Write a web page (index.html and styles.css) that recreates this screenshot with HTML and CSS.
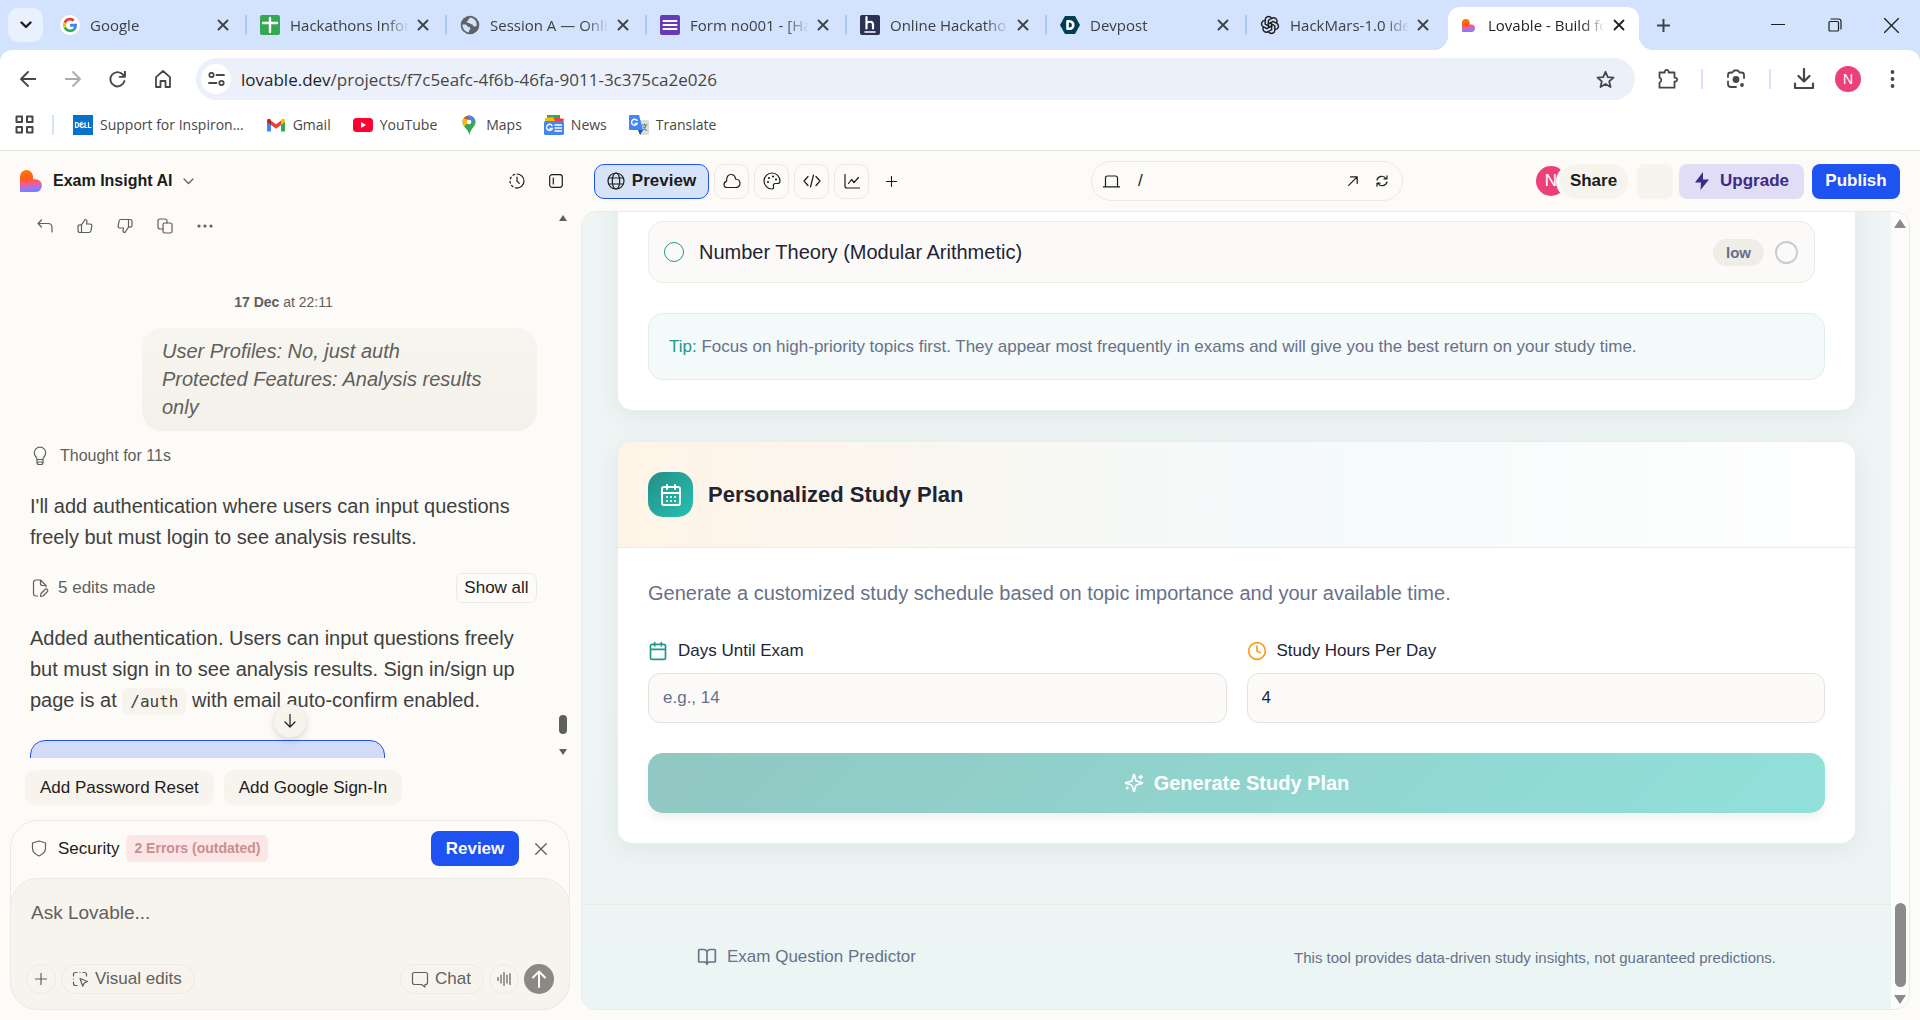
FILE: index.html
```html
<!DOCTYPE html>
<html lang="en">
<head>
  <meta charset="UTF-8">
  <title>Lovable - Build</title>
  <link rel="stylesheet" href="styles.css">
</head>
<body>

  <!-- Shared icons -->
  <svg class="sprite" aria-hidden="true">
    <linearGradient id="heartFill" x1="0.45" y1="0" x2="0.55" y2="1">
      <stop offset="0" stop-color="#ff7a00"/>
      <stop offset="0.4" stop-color="#ff5a1f"/>
      <stop offset="0.6" stop-color="#fb5a86"/>
      <stop offset="0.85" stop-color="#8f7bff"/>
      <stop offset="1" stop-color="#6a82ff"/>
    </linearGradient>
    <symbol id="x" viewBox="0 0 12 12"><path d="M1.5 1.5l9 9M10.5 1.5l-9 9"/></symbol>
    <symbol id="plus" viewBox="0 0 12 12"><path d="M6 0.5v11M0.5 6h11"/></symbol>
    <symbol id="heart" viewBox="0 0 22 22"><path d="M0 6.5A6.5 6.5 0 0 1 13 6.5V9.200h2.500A6.400 6.400 0 0 1 15.500 22H0z" fill="url(#heartFill)" stroke="none"/></symbol>
  </svg>

  <!-- Tab strip -->
  <header class="tabstrip">
    <button class="tab-search" aria-label="Search tabs"><svg width="12" height="8" viewBox="0 0 12 8"><path d="M1.500 1.500L6 6l4.500-4.500" stroke-width="2.400"/></svg></button>
    <nav class="tabs">
      <div class="tab">
        <svg class="favicon" viewBox="0 0 20 20"><g stroke="none"><circle cx="10" cy="10" r="10" fill="#fff"/><path fill="#4285f4" d="M17 8.700H10v3h4c-.2 1-.7 1.700-1.500 2.200l2.300 1.800C16.300 14.300 17.200 12 17 8.700z"/><path fill="#34a853" d="M3.700 13.300C4.900 15.600 7.200 17.200 10 17.200c1.900 0 3.500-.6 4.800-1.600l-2.400-1.800c-2.300 1.500-5.400.5-6.300-2.300z"/><path fill="#fbbc05" d="M3.700 13.300c-1-2.100-1-4.500 0-6.600l2.400 1.800c-.3 1-.3 2 0 3z"/><path fill="#ea4335" d="M3.700 6.700C4.900 4.400 7.200 2.800 10 2.800c1.900 0 3.500.7 4.700 1.900l-2.100 2C10.500 4.700 7 5.500 6.100 8.500z"/></g></svg>
        <span class="tab-title">Google</span>
        <button class="tab-close" aria-label="Close tab"><svg><use href="#x"/></svg></button>
      </div>
      <div class="tab">
        <svg class="favicon" viewBox="0 0 20 20"><rect width="20" height="20" rx="2" fill="#34a853" stroke="none"/><path d="M10 3v14M3 8h14" stroke="#fff" stroke-width="2.400"/></svg>
        <span class="tab-title">Hackathons Infor</span>
        <button class="tab-close" aria-label="Close tab"><svg><use href="#x"/></svg></button>
      </div>
      <div class="tab">
        <svg class="favicon" viewBox="0 0 20 20"><g stroke="none"><circle cx="10" cy="10" r="9.300" fill="#5f6368"/><path fill="#d3e2fd" d="M10.500 2.500c-.8 1-2 1.100-2 2.300 0 1-1.800.9-1.800 2.200 0 1.100 2.300.3 3.300 1.600.8 1 2.800.2 3 1.800.2 1.500 2.500 1 3.700.3.500-3.800-1.700-7.300-6.200-8.200zM2.500 9.500c-.3 3.800 2.400 7.500 6.500 7.900.2-1.400-.3-2 1-2.900 1.200-.9-.2-2.400-1.400-2.500C7 12 7 9.800 5.500 9.600z"/></g></svg>
        <span class="tab-title">Session A — Onli</span>
        <button class="tab-close" aria-label="Close tab"><svg><use href="#x"/></svg></button>
      </div>
      <div class="tab">
        <svg class="favicon" viewBox="0 0 20 20"><rect width="20" height="20" rx="2" fill="#673ab7" stroke="none"/><path d="M3.500 6h2M7 6h9.500M3.500 10h2M7 10h9.500M3.500 14h2M7 14h9.500" stroke="#fff" stroke-width="2"/></svg>
        <span class="tab-title">Form no001 - [Ha</span>
        <button class="tab-close" aria-label="Close tab"><svg><use href="#x"/></svg></button>
      </div>
      <div class="tab">
        <svg class="favicon" viewBox="0 0 20 20"><rect width="20" height="20" rx="2" fill="#2b3252" stroke="none"/><path d="M6.500 2v11.500M6.500 8.500c1-2 6.500-3 6.500 1v4" stroke="#fff" stroke-width="2.200"/><path d="M5 17h10" stroke="#fff" stroke-width="1.500"/></svg>
        <span class="tab-title">Online Hackatho</span>
        <button class="tab-close" aria-label="Close tab"><svg><use href="#x"/></svg></button>
      </div>
      <div class="tab">
        <svg class="favicon" viewBox="0 0 20 20"><path d="M5 1h10l5 9-5 9H5L0 10z" fill="#003e54" stroke="none"/><path d="M7.500 6.200h2c5 0 5 7.600 0 7.600h-2z" stroke="#fff" stroke-width="2.600"/></svg>
        <span class="tab-title">Devpost</span>
        <button class="tab-close" aria-label="Close tab"><svg><use href="#x"/></svg></button>
      </div>
      <div class="tab">
        <svg class="favicon" viewBox="0 0 24 24"><g stroke="#1f1f1f" stroke-width="1.700"><path id="petal" d="M10 13.200V6.500l4.500-2.600a4 4 0 0 1 5.500 5.200"/><use href="#petal" transform="rotate(60 12 12)"/><use href="#petal" transform="rotate(120 12 12)"/><use href="#petal" transform="rotate(180 12 12)"/><use href="#petal" transform="rotate(240 12 12)"/><use href="#petal" transform="rotate(300 12 12)"/></g></svg>
        <span class="tab-title">HackMars-1.0 ide</span>
        <button class="tab-close" aria-label="Close tab"><svg><use href="#x"/></svg></button>
      </div>
      <div class="tab active">
        <svg class="favicon small"><use href="#heart"/></svg>
        <span class="tab-title">Lovable - Build fo</span>
        <button class="tab-close" aria-label="Close tab"><svg><use href="#x"/></svg></button>
      </div>
    </nav>
    <button class="new-tab" aria-label="New tab"><svg width="13" height="13"><use href="#plus"/></svg></button>
    <div class="window-buttons">
      <button aria-label="Minimize"><svg width="14" height="14" viewBox="0 0 14 14"><path d="M0.500 6.500h13"/></svg></button>
      <button aria-label="Restore"><svg width="14" height="14" viewBox="0 0 14 14"><rect x="1" y="3.500" width="9.500" height="9.500" rx="1"/><path d="M3 1h7.500q2.500 0 2.500 2.500V11"/></svg></button>
      <button aria-label="Close"><svg width="15" height="15" viewBox="0 0 14 14"><path d="M0.500 0.500l13 13M13.500 0.500l-13 13"/></svg></button>
    </div>
  </header>

  <!-- Address bar -->
  <div class="toolbar">
    <div class="nav-buttons">
      <button aria-label="Back"><svg width="16" height="16" viewBox="0 0 16 16"><path d="M15.500 8H1.500M8 1L1 8l7 7"/></svg></button>
      <button class="dim" aria-label="Forward"><svg width="16" height="16" viewBox="0 0 16 16"><path d="M.5 8h14M8 1l7 7-7 7"/></svg></button>
      <button aria-label="Reload"><svg width="17" height="17" viewBox="0 0 16 16"><path d="M14.500 9.500A6.700 6.700 0 1 1 13 3.300L14.800 5.200M15 0.500v5h-5"/></svg></button>
      <button aria-label="Home"><svg width="16" height="18" viewBox="0 0 16 18"><path d="M1 7.200L8 1l7 6.200V17h-4.500v-6h-5v6H1z"/></svg></button>
    </div>
    <div class="omnibox">
      <button class="site-info" aria-label="Site information"><svg width="17" height="14" viewBox="0 0 17 14"><circle cx="3.500" cy="3" r="2.200"/><path d="M8.500 3H16M1 11h7.500"/><circle cx="13.500" cy="11" r="2.200"/></svg></button>
      <div class="url"><b>lovable.dev</b>/projects/f7c5eafc-4f6b-46fa-9011-3c375ca2e026</div>
      <button class="star" aria-label="Bookmark this page"><svg width="19" height="19" viewBox="0 0 19 19"><path d="M9.500 1.800l2.300 5.300 5.700.5-4.300 3.800 1.300 5.600-5-3-5 3 1.300-5.600L1.500 7.600l5.700-.5z"/></svg></button>
    </div>
    <div class="tools">
      <button aria-label="Extensions"><svg width="22" height="22" viewBox="0 0 22 22"><path d="M2.500 4.500h5.300a2 2 0 1 1 3.800 0h5.900v5.200a2 2 0 1 1 0 3.800v6.200h-15v-5.200a2.500 2.500 0 0 0 0-4.800z"/></svg></button>
      <i></i>
      <button aria-label="Search with Lens"><svg width="20" height="20" viewBox="0 0 20 20"><path d="M2 8V6q0-2.500 2.500-2.500h2L8 1.500h4l1.500 2h2Q18 3.500 18 6v3M2 12.500V15q0 3 3 3h5"/><circle cx="10" cy="10.500" r="3.400" fill="#474747" stroke="none"/><circle cx="16" cy="16" r="1.900" fill="#474747" stroke="none"/></svg></button>
      <i></i>
      <button aria-label="Downloads"><svg width="22" height="22" viewBox="0 0 22 22"><path d="M11 1v12M5.500 8l5.500 5.500L16.500 8M2 15.500V20h18v-4.500" stroke-width="2.200"/></svg></button>
      <button class="profile" aria-label="Profile">N</button>
      <button aria-label="Menu"><svg width="5" height="18" viewBox="0 0 5 18"><g fill="#474747" stroke="none"><circle cx="2.500" cy="2" r="1.900"/><circle cx="2.500" cy="9" r="1.900"/><circle cx="2.500" cy="16" r="1.900"/></g></svg></button>
    </div>
  </div>

  <!-- Bookmarks -->
  <nav class="bookmarks">
    <button class="apps" aria-label="Apps"><svg width="19" height="19" viewBox="0 0 19 19"><path d="M1.500 1.500h5.500v5.500H1.500zM12 1.500h5.500v5.500H12zM1.500 12h5.500v5.500H1.500zM12 12h5.500v5.500H12z" stroke-width="2"/></svg></button>
    <i></i>
    <a href="#"><svg viewBox="0 0 20 20"><rect width="20" height="20" fill="#0672cb" stroke="none"/><path d="M2.500 7.500v5h1q2 0 2-2.500t-2-2.500zM8.800 7.200L7 8.700v2.600l2 1.400 2-1.200M7.300 10.600l3-2M12 7.500v5h2M15.500 7.500v5h2.500" stroke="#fff" stroke-width="1.200"/></svg>Support for Inspiron...</a>
    <a href="#"><svg viewBox="0 0 20 20"><g stroke="none"><path fill="#4285f4" d="M1 16.500h4V9L1 6z"/><path fill="#34a853" d="M15 16.500h4V6l-4 3z"/><path fill="#ea4335" d="M5 5.500l5 3.800 5-3.800V10l-5 3.800L5 10z"/><path fill="#c5221f" d="M1 6q0-3 3-2l1 1.500V10L1 7z"/><path fill="#fbbc04" d="M15 5.500L16 4q3-1 3 2v1l-4 3z"/></g></svg>Gmail</a>
    <a href="#"><svg viewBox="0 0 20 20"><g stroke="none"><rect y="3" width="20" height="14" rx="3.500" fill="#f03"/><path d="M8 7l5 3-5 3z" fill="#fff"/></g></svg>YouTube</a>
    <a href="#"><svg viewBox="0 0 20 20"><g stroke="none"><path fill="#34a853" d="M3.500 7a6.500 6.500 0 0 1 13 0c0 5-5 6-6 13-1-6-7-8-7-13z"/><path fill="#4285f4" d="M7 1.200a6.500 6.500 0 0 1 9 3.500L11 9 8 5z"/><path fill="#ea4335" d="M7.500 1L4.600 3.300 8 6l2-2.500z"/><path fill="#fbbc04" d="M4.600 3.200C3 5.500 3.300 9 5 11.500l6.500-6z"/><circle cx="10" cy="7" r="2.300" fill="#fff"/></g></svg>Maps</a>
    <a href="#"><svg viewBox="0 0 20 20"><g stroke="none"><path fill="#34a853" d="M3 0h13v8H3z"/><path fill="#ea4335" d="M10 2l10 2-2 6H8z"/><path fill="#fbbc04" d="M1 3l8-1 3 6H1z"/><rect y="6" width="20" height="14" rx="1.500" fill="#4285f4"/></g><path d="M8 10.600a3 3 0 1 0 .3 3H6M11 10h6.500M11 13h6.500M11 16h6.500" stroke="#fff" stroke-width="1.500"/></svg>News</a>
    <a href="#"><svg viewBox="0 0 20 20"><g stroke="none"><path fill="#dcdcdc" d="M7 5h12q1 0 1 1v13q0 1-1 1h-8z"/><path fill="#4285f4" d="M1 0h9l4 15H1q-1 0-1-1V1q0-1 1-1z"/><path fill="#174ea6" d="M9 15h5l-3 5z"/></g><path d="M8 5.500a3 3 0 1 0 .3 3H6" stroke="#fff" stroke-width="1.400"/><path d="M13 10h5M15.500 9v1M17 10q-1 4-3 5M14.500 12l3 3.500" stroke="#607d8b" stroke-width="1.100"/></svg>Translate</a>
  </nav>

  <div class="app">

    <!-- Chat side -->
    <section class="chat">
      <div class="chat-head">
        <svg class="logo"><use href="#heart"/></svg>
        <button class="project">Exam Insight AI <svg width="11" height="7" viewBox="0 0 11 7"><path d="M1 1l4.500 4.500L10 1"/></svg></button>
        <button class="head-icon" aria-label="History"><svg width="16" height="16" viewBox="0 0 16 16"><path d="M8 1a7 7 0 0 1 0 14M8 4v4l2.300 2.300"/><path d="M8 15A7 7 0 0 1 8 1" stroke-dasharray="1.800 2.600"/></svg></button>
        <button class="head-icon" aria-label="Toggle panel"><svg width="14" height="14" viewBox="0 0 14 14"><rect x=".7" y=".7" width="12.600" height="12.600" rx="2.500"/><path d="M4.300 4v6"/></svg></button>
      </div>

      <div class="messages">
        <div class="actions">
          <button aria-label="Revert"><svg width="16" height="16" viewBox="0 0 16 16"><path d="M4.500 2L1 5.500 4.500 9M1 5.500h10q4 0 4 4V14"/></svg></button>
          <button aria-label="Good"><svg width="16" height="16" viewBox="0 0 16 16"><path d="M4.500 6.800L8 1.500q2 0 2 2L9.500 6H13q2.200 0 1.800 2.200l-.8 4.500Q13.600 14.500 12 14.500H3Q1 14.500 1 12.500v-4Q1 6.800 3 6.800zM4.500 6.800v7.700"/></svg></button>
          <button aria-label="Bad"><svg width="16" height="16" viewBox="0 0 16 16"><path d="M11.500 9.200L8 14.500q-2 0-2-2L6.500 10H3Q.8 10 1.200 7.800L2 3.300Q2.400 1.500 4 1.500h9q2 0 2 2v4q0 1.700-2 1.700zM11.500 9.200V1.500"/></svg></button>
          <button aria-label="Copy"><svg width="16" height="16" viewBox="0 0 16 16"><rect x="6" y="5" width="9" height="10" rx="1.800"/><path d="M6 11H3Q1 11 1 9V3q0-2 2-2h5q2 0 2 2v2"/></svg></button>
          <button aria-label="More"><svg width="16" height="16" viewBox="0 0 16 16"><g fill="#5f5f5d" stroke="none"><circle cx="2" cy="8" r="1.600"/><circle cx="8" cy="8" r="1.600"/><circle cx="14" cy="8" r="1.600"/></g></svg></button>
        </div>
        <div class="date"><b>17 Dec</b> at 22:11</div>
        <div class="bubble">User Profiles: No, just auth<br>Protected Features: Analysis results only</div>
        <div class="thought"><svg width="20" height="20" viewBox="0 0 20 20"><path d="M7 13.500q0-1.500-1.300-3A5.700 5.700 0 1 1 14.300 10.500Q13 12 13 13.500zM7 13.500v3q0 2 2 2h2q2 0 2-2v-3M7.500 16h5"/></svg>Thought for 11s</div>
        <p>I'll add authentication where users can input questions freely but must login to see analysis results.</p>
        <div class="edits">
          <svg width="20" height="20" viewBox="0 0 20 20"><path d="M7.500 18H6q-2.500 0-2.500-2.500v-11Q3.500 2 6 2h4.500L16 7.500V9M10.500 2v3.500q0 2 2 2H16M10.500 18.500l.5-3 4.500-4.500q1.300-.5 2 .5t0 2L13 18z"/></svg>
          <span>5 edits made</span>
          <button>Show all</button>
        </div>
        <p>Added authentication. Users can input questions freely but must sign in to see analysis results. Sign in/sign up page is at <code>/auth</code> with email auto-confirm enabled.</p>
        <div class="version"></div>
        <button class="to-bottom" aria-label="Scroll to bottom"><svg width="12" height="14" viewBox="0 0 12 14"><path d="M6 .5v12M1 8l5 5 5-5"/></svg></button>
        <div class="scroll"><span class="up"></span><span class="thumb"></span><span class="down"></span></div>
      </div>

      <div class="suggestions">
        <button>Add Password Reset</button>
        <button>Add Google Sign-In</button>
      </div>

      <div class="composer">
        <div class="security">
          <svg width="16" height="17" viewBox="0 0 16 17"><path d="M8 1l6.500 2v5.500Q14.500 13 8 16 1.500 13 1.500 8.500V3z"/></svg>
          <span>Security</span>
          <span class="errors">2 Errors (outdated)</span>
          <button class="review">Review</button>
          <button class="dismiss" aria-label="Dismiss"><svg width="14" height="14"><use href="#x"/></svg></button>
        </div>
        <form class="prompt">
          <textarea rows="1" placeholder="Ask Lovable..." aria-label="Ask Lovable"></textarea>
          <div class="prompt-row">
            <button type="button" class="round" aria-label="Add"><svg width="12" height="12"><use href="#plus"/></svg></button>
            <button type="button" class="pill"><svg width="17" height="17" viewBox="0 0 17 17"><path d="M1.500 5V3.500q0-2 2-2H5M11 1.500h1.500q2 0 2 2V5M1.500 11v1.500q0 2 2 2H5M8 1.500h.1M1.500 8h.1M8 7.500l7.500 3-3.300 1.500-1.500 3.300z"/></svg>Visual edits</button>
            <span class="space"></span>
            <button type="button" class="pill"><svg width="18" height="17" viewBox="0 0 18 17"><path d="M3.500 1.500h11q2 0 2 2v8q0 2-2 2h-.5V16l-3.500-2.500h-7q-2 0-2-2v-8q0-2 2-2z"/></svg>Chat</button>
            <button type="button" class="round" aria-label="Voice"><svg width="14" height="14" viewBox="0 0 14 14"><path d="M1 5.500v3M4 3v8M7 .5v13M10 3v8M13 1.500v11"/></svg></button>
            <button class="send" aria-label="Send"><svg width="14" height="18" viewBox="0 0 14 18"><path d="M7 17V1.500M1 7.500l6-6 6 6"/></svg></button>
          </div>
        </form>
      </div>
    </section>

    <!-- Preview side -->
    <section class="preview">
      <div class="preview-head">
        <div class="views">
          <button class="view selected"><svg width="18" height="18" viewBox="0 0 18 18"><circle cx="9" cy="9" r="8"/><ellipse cx="9" cy="9" rx="3.700" ry="8"/><path d="M1.500 6h15M1.500 12h15"/></svg>Preview</button>
          <button class="view" aria-label="Cloud"><svg width="18" height="16" viewBox="0 0 18 16"><path d="M4 14.500q-3 0-3-3 0-2.500 2.500-3.200Q3.500 1.500 8 1.500q4 0 4.500 4.500 4.500.3 4.500 4.300t-4 4.200z"/></svg></button>
          <button class="view" aria-label="Design"><svg width="18" height="18" viewBox="0 0 18 18"><path d="M9 1a8 8 0 0 0 0 16q2 0 1.500-2.200-.8-3.300 2-3.300h2Q17 11.500 17 9A8 8 0 0 0 9 1z"/><g fill="#1c1c1c" stroke="none"><circle cx="5" cy="10" r="1.100"/><circle cx="6" cy="6" r="1.100"/><circle cx="10" cy="4.500" r="1.100"/><circle cx="13" cy="7.500" r="1.100"/></g></svg></button>
          <button class="view" aria-label="Code"><svg width="18" height="14" viewBox="0 0 18 14"><path d="M5 2.500L1 7l4 4.500M13 2.500L17 7l-4 4.500M10.500 1l-3 12"/></svg></button>
          <button class="view" aria-label="Analytics"><svg width="16" height="15" viewBox="0 0 16 15"><path d="M1 .5V12q0 2 2 2h12.500M4.500 9.500l3-4 2.500 3 4.500-5"/></svg></button>
          <button class="view plain" aria-label="More views"><svg width="11" height="11"><use href="#plus"/></svg></button>
        </div>
        <div class="path">
          <svg width="17" height="13" viewBox="0 0 17 13"><path d="M2.500 11.500V3q0-2 2-2h8q2 0 2 2v8.500M0 11.800h17"/></svg>
          <input type="text" value="/" aria-label="Path">
          <button aria-label="Open in new tab"><svg width="10" height="10" viewBox="0 0 10 10"><path d="M.7 9.300l8.500-8.500M2.500.8h6.700v6.700"/></svg></button>
          <button aria-label="Refresh"><svg width="12" height="12" viewBox="0 0 12 12"><path d="M1 5a5 5 0 0 1 9-1.500M11 .8v3H8M11 7a5 5 0 0 1-9 1.500M1 11.200v-3h3"/></svg></button>
        </div>
        <div class="account">
          <span class="avatar">N</span>
          <button class="share">Share</button>
          <button class="blank" aria-label="GitHub"></button>
          <button class="upgrade"><svg width="16" height="18" viewBox="0 0 16 18"><path d="M9 0L1 10.500h6L6.500 18 15 7.500H9z" fill="#3a2c88" stroke="none"/></svg>Upgrade</button>
          <button class="publish">Publish</button>
        </div>
      </div>

      <div class="frame">
        <div class="page">
          <main>
            <div class="card topics">
              <label class="topic">
                <span class="dot"></span>
                <span class="topic-name">Number Theory (Modular Arithmetic)</span>
                <span class="level">low</span>
                <input type="checkbox">
              </label>
              <div class="tip"><span>Tip:</span> Focus on high-priority topics first. They appear most frequently in exams and will give you the best return on your study time.</div>
            </div>

            <div class="card plan">
              <div class="plan-head">
                <span class="badge"><svg width="24" height="24" viewBox="0 0 24 24"><path d="M8 2v4M16 2v4M3 10h18M5 4h14a2 2 0 0 1 2 2v14a2 2 0 0 1-2 2H5a2 2 0 0 1-2-2V6a2 2 0 0 1 2-2zM8 14h.01M12 14h.01M16 14h.01M8 18h.01M12 18h.01M16 18h.01"/></svg></span>
                <h2>Personalized Study Plan</h2>
              </div>
              <form class="plan-body">
                <p>Generate a customized study schedule based on topic importance and your available time.</p>
                <div class="fields">
                  <div class="field">
                    <label for="days"><svg class="teal" width="20" height="20" viewBox="0 0 24 24"><path d="M8 2v4M16 2v4M3 10h18M5 4h14a2 2 0 0 1 2 2v14a2 2 0 0 1-2 2H5a2 2 0 0 1-2-2V6a2 2 0 0 1 2-2z"/></svg>Days Until Exam</label>
                    <input type="text" id="days" placeholder="e.g., 14">
                  </div>
                  <div class="field">
                    <label for="hours"><svg class="amber" width="20" height="20" viewBox="0 0 24 24"><circle cx="12" cy="12" r="10"/><path d="M12 6v6l4 2"/></svg>Study Hours Per Day</label>
                    <input type="text" id="hours" value="4">
                  </div>
                </div>
                <button class="generate" disabled><svg width="20" height="20" viewBox="0 0 24 24"><path d="M9.900 15.500A2 2 0 0 0 8.500 14.100l-6.100-1.600a.5.5 0 0 1 0-1L8.500 9.900A2 2 0 0 0 9.900 8.500l1.600-6.100a.5.5 0 0 1 1 0L14.100 8.500a2 2 0 0 0 1.400 1.400l6.100 1.600a.5.5 0 0 1 0 1l-6.100 1.600a2 2 0 0 0-1.400 1.400l-1.600 6.100a.5.5 0 0 1-1 0zM20 3v4M22 5h-4M4 17v2M5 18H3"/></svg>Generate Study Plan</button>
              </form>
            </div>
          </main>

          <footer>
            <span class="brand"><svg width="20" height="20" viewBox="0 0 24 24"><path d="M12 7v14M3 18a1 1 0 0 1-1-1V4a1 1 0 0 1 1-1h5a4 4 0 0 1 4 4 4 4 0 0 1 4-4h5a1 1 0 0 1 1 1v13a1 1 0 0 1-1 1h-6a3 3 0 0 0-3 3 3 3 0 0 0-3-3z"/></svg>Exam Question Predictor</span>
            <span class="note">This tool provides data-driven study insights, not guaranteed predictions.</span>
          </footer>
        </div>
        <div class="page-scroll"><span class="up"></span><span class="thumb"></span><span class="down"></span></div>
      </div>
    </section>
  </div>

</body>
</html>
```

FILE: styles.css
```css
* {
  box-sizing: border-box;
}

body {
  margin: 0;
  height: 100vh;
  display: flex;
  flex-direction: column;
  overflow: hidden;
  background: #d3e2fd;
  font-family: "Liberation Sans", Arial, sans-serif;
  color: #1c1c1c;
}

button, input, textarea {
  font: inherit;
  color: inherit;
}

button {
  display: flex;
  align-items: center;
  justify-content: center;
  padding: 0;
  border: none;
  background: none;
  white-space: nowrap;
}

svg {
  flex: none;
  fill: none;
  stroke: currentColor;
  stroke-width: 1.2;
  stroke-linecap: round;
  stroke-linejoin: round;
}

.sprite {
  position: absolute;
  width: 0;
  height: 0;
}

/* Tab strip */
.tabstrip {
  height: 50px;
  flex: none;
  display: flex;
  align-items: center;
  padding-left: 8px;
  font-family: "Open Sans", "Noto Sans", sans-serif;
  font-size: 15px;
  color: #3c4043;
}

.tab-search {
  width: 35px;
  height: 34px;
  border-radius: 10px;
  background: #e9f0fe;
  color: #1f1f1f;
}

.tabs {
  display: flex;
  align-self: stretch;
  padding-left: 5px;
}

.tab {
  width: 200px;
  display: flex;
  align-items: center;
  padding: 0 19px 0 12px;
  position: relative;
}

.tab:not(.active)::after {
  content: "";
  position: absolute;
  right: 1px;
  width: 2px;
  height: 20px;
  background: #a8c7fa;
}

.tab:nth-last-child(2)::after {
  display: none;
}

.favicon {
  width: 20px;
  height: 20px;
}

.favicon.small {
  width: 13px;
  height: 13px;
}

.tab-title {
  flex: 1;
  margin: 0 8px 0 10px;
  overflow: hidden;
  white-space: nowrap;
  -webkit-mask-image: linear-gradient(to right, #000 80%, transparent);
  mask-image: linear-gradient(to right, #000 80%, transparent);
}

.tab-close svg {
  width: 12px;
  height: 12px;
  stroke-width: 1.8;
}

.tab.active {
  width: 191px;
  margin-top: 7px;
  padding: 0 14px;
  background: #fff;
  border-radius: 12px 12px 0 0;
  color: #1f1f1f;
}

.tab.active .tab-title {
  margin-left: 13px;
}

.tab.active .favicon,
.tab.active .tab-title,
.tab.active .tab-close {
  margin-bottom: 7px;
}

/* inverted corners at the foot of the active tab */
.tab.active::before,
.tab.active::after {
  content: "";
  position: absolute;
  bottom: 0;
  width: 14px;
  height: 14px;
}

.tab.active::before {
  left: -14px;
  background: radial-gradient(circle at 0 0, transparent 14px, #fff 14px);
}

.tab.active::after {
  right: -14px;
  background: radial-gradient(circle at 100% 0, transparent 14px, #fff 14px);
}

.new-tab {
  margin-left: 18px;
}

.new-tab svg {
  stroke-width: 1.8;
}

.window-buttons {
  margin-left: auto;
  display: flex;
  color: #1f1f1f;
}

.window-buttons button {
  width: 57px;
  height: 42px;
}

/* Address bar */
.toolbar {
  flex: none;
  height: 58px;
  display: flex;
  align-items: center;
  padding: 0 11px 0 5px;
  background: #fff;
  border-radius: 12px 12px 0 0;
  color: #474747;
}

.toolbar svg {
  stroke-width: 1.8;
}

.nav-buttons {
  display: flex;
  width: 191px;
}

.nav-buttons button {
  width: 45px;
  height: 40px;
}

.dim {
  opacity: 0.45;
}

.omnibox {
  flex: 1;
  height: 42px;
  display: flex;
  align-items: center;
  padding: 0 20px 0 5px;
  border-radius: 21px;
  background: #ebf0fa;
}

.site-info {
  width: 30px;
  height: 30px;
  border-radius: 50%;
  background: #fff;
}

.url {
  flex: 1;
  margin-left: 10px;
  font-family: "Open Sans", "Noto Sans", sans-serif;
  font-size: 17px;
}

.url b {
  font-weight: normal;
  color: #1f1f1f;
}

.tools {
  display: flex;
  align-items: center;
  padding-left: 16px;
}

.tools button {
  width: 34px;
  height: 34px;
}

.tools i,
.bookmarks i {
  width: 2px;
  height: 20px;
  background: #d3e2fd;
}

.tools i {
  margin: 0 16px;
}

.tools .profile {
  width: 26px;
  height: 26px;
  margin: 0 14px;
  border-radius: 50%;
  background: #ec407a;
  color: #fff;
  font-size: 14px;
}

/* Bookmarks */
.bookmarks {
  flex: none;
  height: 43px;
  display: flex;
  align-items: center;
  padding: 0 15px 9px;
  background: #fff;
  border-bottom: 1px solid #dfe4de;
  font-family: "Open Sans", "Noto Sans", sans-serif;
  font-size: 14px;
  color: #474747;
}

.bookmarks i {
  margin: 0 19px 0 18px;
}

.bookmarks a {
  display: flex;
  align-items: center;
  gap: 7px;
  margin-right: 22px;
  color: inherit;
  text-decoration: none;
}

.bookmarks a svg {
  width: 20px;
  height: 20px;
}

/* App */
.app {
  flex: 1;
  min-height: 0;
  display: flex;
  background: #fcfbf8;
}

.chat {
  flex: none;
  width: 581px;
  display: flex;
  flex-direction: column;
  padding: 0 11px 10px 10px;
}

.chat-head {
  height: 60px;
  flex: none;
  display: flex;
  align-items: center;
  gap: 11px;
  padding-left: 10px;
}

.logo {
  width: 22px;
  height: 22px;
}

.project {
  gap: 11px;
  margin-right: auto;
  font-size: 16px;
  font-weight: bold;
}

.project svg {
  color: #5f5f5d;
}

.head-icon {
  width: 28px;
  height: 30px;
}

.messages {
  flex: 1;
  min-height: 0;
  overflow: hidden;
  position: relative;
  padding: 0 33px 0 20px;
  color: #5f5f5d;
  font-size: 17px;
}

.actions {
  display: flex;
  margin-left: -5px;
}

.actions button {
  width: 40px;
  height: 30px;
}

.date {
  margin-top: 49px;
  line-height: 24px;
  text-align: center;
  font-size: 14px;
}

.bubble {
  width: 395px;
  margin: 14px 0 0 auto;
  padding: 9px 40px 10px 20px;
  border-radius: 20px;
  background: linear-gradient(#f7f5ef, #f4f1ea);
  font-size: 20px;
  font-style: italic;
  line-height: 28px;
}

.thought {
  display: flex;
  align-items: center;
  gap: 10px;
  margin-top: 13px;
  font-size: 16px;
  line-height: 24px;
}

.messages p {
  margin: 23px 0 0;
  font-size: 20px;
  line-height: 31px;
  color: #40403f;
}

.edits {
  display: flex;
  align-items: center;
  gap: 8px;
  margin-top: 20px;
}

.edits button {
  margin-left: auto;
  width: 81px;
  height: 30px;
  border: 1px solid #eceae4;
  border-radius: 7px;
  color: #1c1c1c;
}

.edits + p {
  margin-top: 20px;
}

code {
  padding: 4px 8px;
  border-radius: 6px;
  background: #f7f4ed;
  font-family: "DejaVu Sans Mono", monospace;
  font-size: 16px;
}

.version {
  width: 355px;
  height: 80px;
  margin-top: 23px;
  border: 1px solid #1e52f1;
  border-radius: 15px;
  background: #d2dcf8;
}

.to-bottom {
  position: absolute;
  left: 263px;
  bottom: 20px;
  width: 34px;
  height: 34px;
  border-radius: 50%;
  background: #f7f4ed;
  border: 1px solid #f0ede6;
  box-shadow: 0 3px 6px rgba(0, 0, 0, 0.12);
  color: #1c1c1c;
}

.scroll {
  position: absolute;
  top: 4px;
  right: 3px;
  bottom: 3px;
  width: 9px;
  display: flex;
  flex-direction: column;
  align-items: center;
}

.scroll .thumb {
  width: 8px;
  height: 19px;
  margin: auto 0 15px;
  border-radius: 4px;
  background: #5f5f5d;
}

.up,
.down {
  width: 0;
  border: 4px solid transparent;
}

.up {
  border-top: none;
  border-bottom: 6px solid #5f5f5d;
}

.down {
  border-bottom: none;
  border-top: 6px solid #5f5f5d;
}

.suggestions {
  display: flex;
  gap: 10px;
  margin: 12px 15px 15px;
}

.suggestions button {
  height: 35px;
  padding: 0 15px;
  border-radius: 10px;
  background: #f7f4ed;
  font-size: 17px;
}

.composer {
  border: 1px solid #eceae4;
  border-radius: 28px;
}

.security {
  height: 57px;
  display: flex;
  align-items: center;
  padding: 0 13px 2px 20px;
  font-size: 17px;
}

.security > svg {
  margin-right: 11px;
  color: #5f5f5d;
}

.errors {
  margin: 0 auto 0 7px;
  padding: 0 8px;
  border-radius: 5px;
  background: #fce6e6;
  color: #c98f8f;
  font-size: 14px;
  font-weight: bold;
  line-height: 27px;
}

.review {
  width: 88px;
  height: 35px;
  border-radius: 8px;
  background: #1e52f1;
  color: #fcfbf8;
  font-size: 17px;
  font-weight: bold;
}

.dismiss {
  width: 30px;
  margin-left: 7px;
  color: #5f5f5d;
}

.prompt {
  margin: 0 -1px -1px;
  padding: 20px 15px 15px;
  border: 1px solid #eceae4;
  border-radius: 28px;
  background: #f7f4ed;
  color: #5f5f5d;
}

.prompt textarea {
  display: block;
  width: 100%;
  height: 28px;
  margin-bottom: 37px;
  padding: 0 5px;
  border: none;
  background: none;
  resize: none;
  overflow: hidden;
  font-size: 19px;
  line-height: 28px;
}

.prompt textarea::placeholder {
  color: #5f5f5d;
  opacity: 1;
}

.prompt-row {
  display: flex;
  gap: 5px;
}

.round,
.pill,
.send {
  height: 30px;
  border: 1px solid #eceae4;
  border-radius: 15px;
}

.round,
.send {
  width: 30px;
}

.pill {
  gap: 6px;
  padding: 0 12px 0 10px;
  font-size: 17px;
}

.space {
  flex: 1;
}

.send {
  border: none;
  background: #8a8985;
  color: #fcfbf8;
}

.send svg {
  stroke-width: 2;
}

/* Preview side */
.preview {
  flex: 1;
  min-width: 0;
  display: flex;
  flex-direction: column;
  padding: 0 10px 10px 0;
}

.preview-head {
  height: 60px;
  flex: none;
  display: flex;
  align-items: center;
  justify-content: space-between;
  padding: 0 10px 0 13px;
  font-size: 17px;
}

.views {
  flex: 1;
  display: flex;
  align-items: center;
  gap: 5px;
}

.view {
  width: 35px;
  height: 35px;
  border: 1px solid #eceae4;
  border-radius: 10px;
}

.view.selected {
  width: 115px;
  gap: 7px;
  border-color: #1e52f1;
  background: #d7e4f8;
  font-weight: bold;
}

.view.plain {
  border: none;
}

.path {
  width: 312px;
  height: 40px;
  display: flex;
  align-items: center;
  gap: 18px;
  padding: 0 14px 0 11px;
  border: 1px solid #eceae4;
  border-radius: 20px;
}

.path input {
  flex: 1;
  min-width: 0;
  padding: 0;
  border: none;
  background: none;
}

.account {
  flex: 1;
  display: flex;
  align-items: center;
  justify-content: flex-end;
  font-weight: bold;
}

.account button {
  height: 35px;
  border-radius: 8px;
}

.avatar {
  width: 30px;
  height: 30px;
  margin-right: -7px;
  border-radius: 50%;
  background: #ec407a;
  color: #fff;
  font-weight: normal;
  line-height: 30px;
  text-align: center;
}

.account .share {
  width: 69px;
  border-radius: 18px;
  background: #f7f4ed;
  box-shadow: -3px 0 0 #fcfbf8;
}

.account .blank {
  width: 36px;
  margin: 0 6px 0 9px;
  background: #f7f4ed;
}

.account .upgrade {
  width: 125px;
  gap: 10px;
  background: #e1ddf7;
  color: #3a2c88;
}

.account .publish {
  width: 88px;
  margin-left: 8px;
  background: #1e52f1;
  color: #fcfbf8;
}

.frame {
  flex: 1;
  min-height: 0;
  display: flex;
  border: 1px solid #eceae4;
  border-radius: 15px;
  overflow: hidden;
  background: #fcfcfc;
}

/* content sits at the end of its scroll */
.page {
  flex: 1;
  display: flex;
  flex-direction: column;
  justify-content: flex-end;
  overflow: hidden;
  background: linear-gradient(#eff5f5, #eff5f5 60%, #ebf5f3);
  color: #1f2433;
}

main {
  display: flex;
  flex-direction: column;
  gap: 30px;
  padding: 0 35px 60px;
}

.card {
  border: 1px solid #eeece7;
  border-radius: 15px;
  background: #fff;
  box-shadow: 0 5px 25px rgba(31, 60, 70, 0.08);
}

.topics {
  padding: 60px 30px 30px;
}

.topic {
  display: flex;
  align-items: center;
  height: 62px;
  margin-right: 10px;
  padding: 0 16px 0 15px;
  border: 1px solid #eeece7;
  border-radius: 15px;
  background: #fbfaf9;
  font-size: 20px;
}

.dot {
  width: 20px;
  height: 20px;
  border: 1px solid #21968a;
  border-radius: 50%;
}

.topic-name {
  flex: 1;
  margin-left: 15px;
}

.level {
  padding: 0 13px;
  border-radius: 14px;
  background: #efede8;
  color: #646f87;
  font-size: 15px;
  font-weight: bold;
  line-height: 27px;
}

.topic input {
  appearance: none;
  width: 23px;
  height: 23px;
  margin: 0 0 0 11px;
  border: 2px solid #c8cdd5;
  border-radius: 50%;
}

.tip {
  margin-top: 30px;
  padding: 0 20px;
  border: 1px solid #dfeeed;
  border-radius: 15px;
  background: #f4f9f9;
  color: #67718a;
  font-size: 17px;
  line-height: 65px;
}

.tip span {
  color: #21968a;
}

.plan {
  overflow: hidden;
}

.plan-head {
  height: 106px;
  display: flex;
  align-items: center;
  gap: 15px;
  padding: 0 30px;
  border-bottom: 1px solid #eceae6;
  background: linear-gradient(to right, #fff4e7, #f4f9f9 50%, #fff);
}

.badge {
  width: 45px;
  height: 45px;
  display: flex;
  align-items: center;
  justify-content: center;
  border-radius: 15px;
  background: linear-gradient(135deg, #248f86, #25c0b2);
  color: #fff;
}

.badge svg,
.generate svg,
.brand svg,
.field svg {
  stroke-width: 2;
}

h2 {
  margin: 0;
  font-size: 22px;
}

.plan-body {
  padding: 30px;
}

.plan-body p {
  margin: 0 0 30px;
  font-size: 20px;
  line-height: 30px;
  color: #67718a;
}

.fields {
  display: flex;
  gap: 20px;
  margin-bottom: 30px;
}

.field {
  flex: 1;
}

.field label {
  display: flex;
  align-items: center;
  gap: 10px;
  margin-bottom: 10px;
  font-size: 17px;
  line-height: 25px;
}

.teal {
  color: #21968a;
}

.amber {
  color: #f59f1c;
}

.field input {
  width: 100%;
  height: 50px;
  padding: 0 14px;
  border: 1px solid #e6e3dc;
  border-radius: 12px;
  background: #fbfaf9;
  font-size: 17px;
}

.field input::placeholder {
  color: #67718a;
  opacity: 1;
}

.generate {
  width: 100%;
  height: 60px;
  gap: 10px;
  border-radius: 15px;
  background: linear-gradient(135deg, #91c7c2, #91e1da);
  box-shadow: 0 5px 8px rgba(0, 0, 0, 0.06);
  color: #fff;
  font-size: 20px;
  font-weight: bold;
}

footer {
  height: 105px;
  flex: none;
  display: flex;
  align-items: center;
  justify-content: space-between;
  padding: 0 115px;
  border-top: 1px solid #e8ece8;
  color: #67718a;
  font-size: 17px;
}

.brand {
  display: flex;
  align-items: center;
  gap: 10px;
}

.note {
  font-size: 15px;
}

.page-scroll {
  width: 18px;
  display: flex;
  flex-direction: column;
  align-items: center;
  padding: 7px 0 5px;
}

.page-scroll .thumb {
  width: 11px;
  height: 84px;
  margin: auto 0 8px;
  border-radius: 6px;
  background: #8b8b8b;
}

.page-scroll .up {
  border-width: 0 6px 9px;
  border-bottom-color: #8b8b8b;
}

.page-scroll .down {
  border-width: 9px 6px 0;
  border-top-color: #8b8b8b;
}
```
